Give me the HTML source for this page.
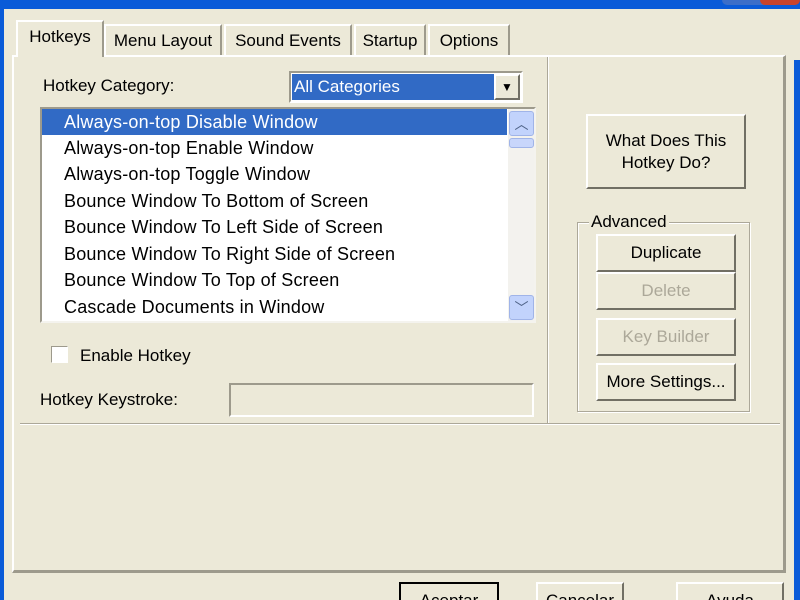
<!DOCTYPE html>
<html style="overflow:hidden;height:600px"><head><style>
body{margin:0;width:800px;height:600px;background:#ece9d8;position:relative;overflow:hidden;font-family:"Liberation Sans",sans-serif;font-size:17px;color:#000}
.a{position:absolute}
.btn{position:absolute;background:#ece9d8;border-top:2px solid #fff;border-left:2px solid #fff;border-right:2px solid #716f64;border-bottom:2px solid #716f64;box-sizing:border-box;text-align:center}
.tab{position:absolute;top:24px;height:31px;border-top:2px solid #fff;border-left:2px solid #fff;border-right:2px solid #9d9a8c;box-sizing:border-box;line-height:30px;text-align:center;font-size:17px}
.li{position:absolute;left:22px;height:26px;line-height:26px;font-size:18px;letter-spacing:0.2px}
.dis{color:#aca899}
.bb{position:absolute;top:582px;height:18px;overflow:hidden;background:#ece9d8;border-top:2px solid #fff;border-left:2px solid #fff;border-right:2px solid #716f64;box-sizing:border-box;text-align:center;line-height:34px}
</style></head><body>
<div class="a" style="left:0;top:0;width:800px;height:9px;background:#0a5bd8"></div>
<div class="a" style="left:722px;top:0;width:50px;height:5px;background:#3b6ec9;border-radius:0 0 8px 8px"></div>
<div class="a" style="left:760px;top:0;width:40px;height:5px;background:#c8432c;border-radius:0 0 8px 8px"></div>
<div class="a" style="left:0;top:9px;width:4px;height:591px;background:#0a5bd8"></div>
<div class="a" style="left:794px;top:60px;width:6px;height:540px;background:#0a5bd8"></div>
<div class="a" style="left:12px;top:55px;width:774px;height:518px;border-top:2px solid #fff;border-left:2px solid #fff;border-right:3px solid #9d9a8c;border-bottom:3px solid #9d9a8c;box-sizing:border-box"></div>
<div class="tab" style="left:16px;top:20px;height:37px;width:88px;background:#ece9d8">Hotkeys</div>
<div class="tab" style="left:104px;width:118px">Menu Layout</div>
<div class="tab" style="left:224px;width:128px">Sound Events</div>
<div class="tab" style="left:354px;width:72px">Startup</div>
<div class="tab" style="left:428px;width:82px">Options</div>
<div class="a" style="left:43px;top:76px">Hotkey Category:</div>
<div class="a" style="left:289px;top:71px;width:234px;height:32px;border:2px solid #9d9a8c;border-right-color:#fff;border-bottom-color:#fff;background:#fff;box-sizing:border-box"></div>
<div class="a" style="left:292px;top:74px;width:201px;height:26px;background:#316ac5;color:#fff;line-height:26px;padding-left:2px">All Categories</div>
<div class="btn" style="left:494px;top:74px;width:26px;height:26px;font-size:12px;line-height:22px">▼</div>
<div class="a" style="left:40px;top:107px;width:496px;height:216px;border:2px solid #9d9a8c;border-right-color:#f4f3ee;border-bottom-color:#f4f3ee;background:#fff;box-sizing:border-box;overflow:hidden">
<div class="a" style="left:0;top:0;width:465px;height:26px;background:#316ac5"></div>
<div class="li" style="top:0;color:#fff">Always-on-top Disable Window</div>
<div class="li" style="top:26px">Always-on-top Enable Window</div>
<div class="li" style="top:52px">Always-on-top Toggle Window</div>
<div class="li" style="top:79px">Bounce Window To Bottom of Screen</div>
<div class="li" style="top:105px">Bounce Window To Left Side of Screen</div>
<div class="li" style="top:132px">Bounce Window To Right Side of Screen</div>
<div class="li" style="top:158px">Bounce Window To Top of Screen</div>
<div class="li" style="top:185px">Cascade Documents in Window</div>
<div class="a" style="left:466px;top:0;width:26px;height:212px;background:#f3f2ee"></div>
<div class="a" style="left:467px;top:2px;width:23px;height:23px;background:#c2d3fc;border:1px solid #a0b4e8;border-radius:3px;color:#4d6185;text-align:center;font-size:14px;line-height:24px">︿</div>
<div class="a" style="left:467px;top:29px;width:23px;height:8px;background:#c8d6fb;border:1px solid #a0b4e8;border-radius:3px"></div>
<div class="a" style="left:467px;top:186px;width:23px;height:23px;background:#c2d3fc;border:1px solid #a0b4e8;border-radius:3px;color:#4d6185;text-align:center;font-size:14px;line-height:24px">﹀</div>
</div>
<div class="a" style="left:51px;top:346px;width:17px;height:17px;border:1px solid #9d9a8c;border-right-color:#fff;border-bottom-color:#fff;background:#fff;box-sizing:border-box"></div>
<div class="a" style="left:80px;top:346px">Enable Hotkey</div>
<div class="a" style="left:40px;top:390px">Hotkey Keystroke:</div>
<div class="a" style="left:229px;top:383px;width:305px;height:34px;border:2px solid #9d9a8c;border-right-color:#fff;border-bottom-color:#fff;box-sizing:border-box"></div>
<div class="a" style="left:547px;top:57px;width:1px;height:366px;background:#aca899;border-right:1px solid #fff"></div>
<div class="a" style="left:20px;top:423px;width:760px;height:1px;background:#aca899;border-bottom:1px solid #fff"></div>
<div class="btn" style="left:586px;top:114px;width:160px;height:75px;padding-top:14px;line-height:22px">What Does This<br>Hotkey Do?</div>
<div class="a" style="left:577px;top:222px;width:171px;height:188px;border:1px solid #aca899;box-shadow:inset 1px 1px #fff,1px 1px #fff"></div>
<div class="a" style="left:589px;top:212px;background:#ece9d8;padding:0 2px">Advanced</div>
<div class="btn" style="left:596px;top:234px;width:140px;height:38px;line-height:34px">Duplicate</div>
<div class="btn dis" style="left:596px;top:272px;width:140px;height:38px;line-height:34px">Delete</div>
<div class="btn dis" style="left:596px;top:318px;width:140px;height:38px;line-height:34px">Key Builder</div>
<div class="btn" style="left:596px;top:363px;width:140px;height:38px;line-height:34px">More Settings...</div>
<div class="bb" style="left:399px;width:100px;border:2px solid #000;border-bottom:0">Aceptar</div>
<div class="bb" style="left:536px;width:88px">Cancelar</div>
<div class="bb" style="left:676px;width:108px">Ayuda</div>
</body></html>
